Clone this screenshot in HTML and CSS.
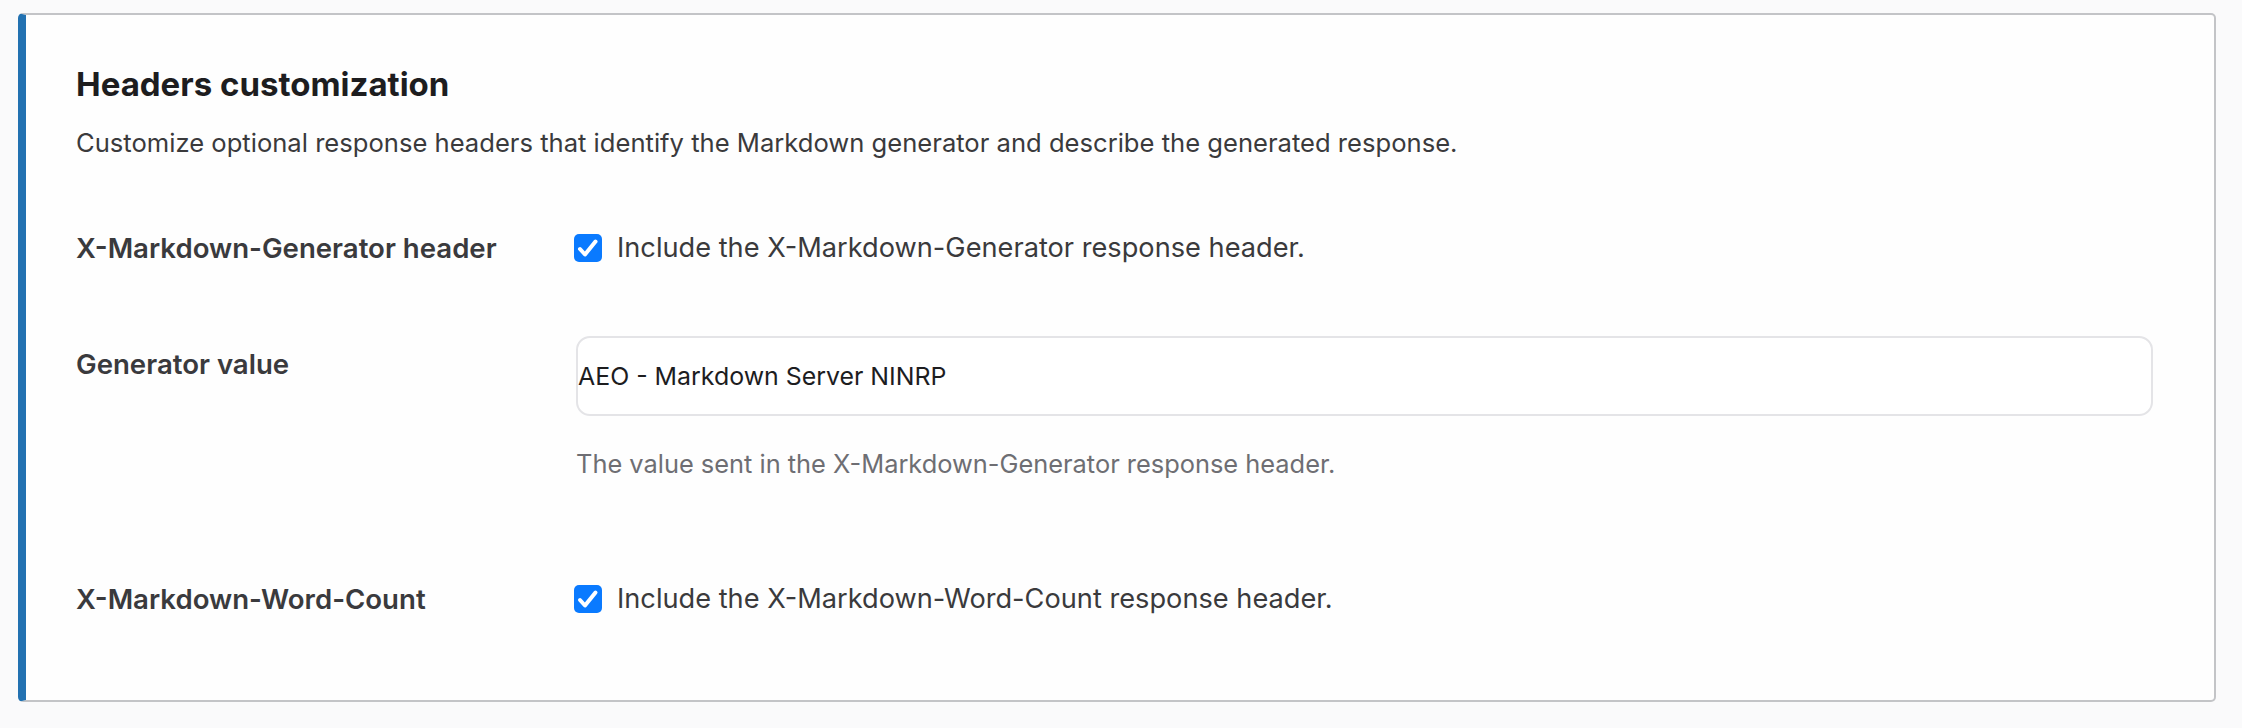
FILE: index.html
```html
<!DOCTYPE html>
<html lang="en">
<head>
    <meta charset="UTF-8">
    <meta name="viewport" content="width=device-width, initial-scale=1.0">
    <title>Headers customization</title>
    <link rel="stylesheet" href="styles.css">
</head>
<body>
    <div class="card">
        <h2 class="card-title">Headers customization</h2>
        <p class="card-desc">Customize optional response headers that identify the Markdown generator and describe the generated response.</p>

        <div class="form">
            <!-- Generator header toggle -->
            <div class="row">
                <div class="label">X-Markdown-Generator header</div>
                <div class="field">
                    <label class="check">
                        <span class="box">
                            <svg viewBox="0 0 28 28"><path d="M6 15l5 5.5L21.5 7.5"/></svg>
                        </span>
                        Include the X-Markdown-Generator response header.
                    </label>
                </div>
            </div>

            <!-- Generator value -->
            <div class="row">
                <div class="label label-input">Generator value</div>
                <div class="field">
                    <input class="text-input" type="text" value="AEO - Markdown Server NINRP">
                    <p class="help">The value sent in the X-Markdown-Generator response header.</p>
                </div>
            </div>

            <!-- Word count toggle -->
            <div class="row row-last">
                <div class="label">X-Markdown-Word-Count</div>
                <div class="field">
                    <label class="check">
                        <span class="box">
                            <svg viewBox="0 0 28 28"><path d="M6 15l5 5.5L21.5 7.5"/></svg>
                        </span>
                        Include the X-Markdown-Word-Count response header.
                    </label>
                </div>
            </div>
        </div>
    </div>
</body>
</html>
```

FILE: styles.css
```css
* {
    margin: 0;
    padding: 0;
    box-sizing: border-box;
    font-family: Inter, 'Noto Sans', sans-serif;
}

body {
    background: #fafafb;
    padding: 13px 26px 0 18px;
}

.card {
    background: #fefefe;
    border: 2px solid #c3c4c7;
    border-left: 8px solid #2271b1;
    border-radius: 5px;
    padding: 48px 61px 87px 50px;
}

.card-title {
    font-size: 33px;
    line-height: 43px;
    font-weight: 700;
    color: #1d1d1f;
    margin-bottom: 19px;
}

.card-desc {
    font-size: 25.6px;
    line-height: 36px;
    color: #3a3a3c;
}

.form {
    margin-top: 73px;
    display: flex;
    flex-direction: column;
    gap: 74px;
}

.row {
    display: grid;
    grid-template-columns: 498px 1fr;
    align-items: start;
}

.row-last {
    margin-top: 30px;
}

.label {
    font-size: 27.6px;
    line-height: 28px;
    font-weight: 600;
    color: #3a3a3d;
}

.label-input {
    padding-top: 14px;
}

.check {
    display: flex;
    align-items: center;
    gap: 15px;
    font-size: 27.2px;
    line-height: 28px;
    color: #3a3a3c;
}

.box {
    width: 28px;
    height: 28px;
    border-radius: 5px;
    background: #0a7aff;
    display: flex;
    flex-shrink: 0;
}

.box svg {
    width: 100%;
    height: 100%;
    fill: none;
    stroke: white;
    stroke-width: 4;
    stroke-linecap: round;
    stroke-linejoin: round;
}

.text-input {
    display: block;
    width: calc(100% - 2px);
    margin-left: 2px;
    height: 80px;
    border: 2px solid #e4e4e7;
    border-radius: 14px;
    background: #fff;
    padding: 0;
    font-size: 24.9px;
    color: #1d1d1f;
    outline: none;
}

.help {
    margin-top: 30px;
    font-size: 25.4px;
    line-height: 35px;
    color: #6e6e73;
    padding-left: 2px;
}
```
